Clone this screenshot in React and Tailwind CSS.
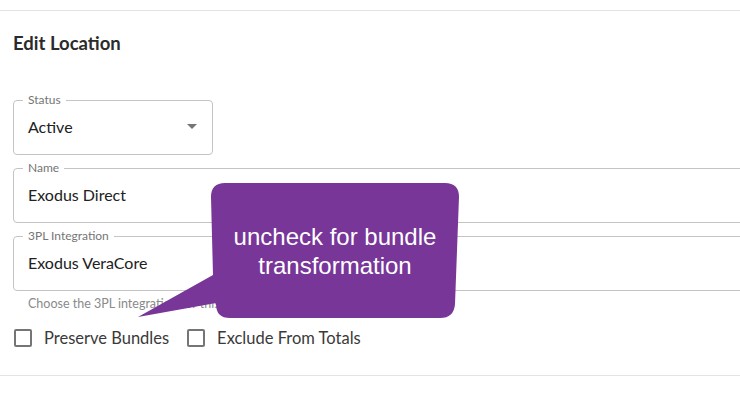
import React from "react";

const Field = ({ label, value, className = "", children }) => {
  return (
    <div className={`relative h-[55px] rounded-[4px] border border-[#c4c4c4] ${className}`}>
      <span className="absolute -top-[9px] left-[9px] bg-white px-[5px] text-[12px] leading-[16px] text-[#757575]">
        {label}
      </span>
      <div className="flex h-full items-center pl-[14px] pr-[14px] pb-[2px] text-[16px] text-[#212121]">
        <span className="flex-1">{value}</span>
        {children}
      </div>
    </div>
  );
};

const Checkbox = ({ label }) => {
  return (
    <label className="flex items-center">
      <span className="ml-[1px] h-[18px] w-[18px] rounded-[2px] border-2 border-[#757575]" />
      <span className="ml-[12px] text-[16.5px] leading-[18px] text-[#3a3a3a]">{label}</span>
    </label>
  );
};

const App = () => {
  return (
    <div
      className="relative h-[401px] w-[740px] overflow-hidden bg-white"
      style={{ fontFamily: "Lato, 'Open Sans', sans-serif" }}
    >
      <div className="mt-[10px] border-t border-[#e3e3e3] px-[13px]">
        <h1 className="mt-[22px] text-[18.5px] font-bold leading-[20px] text-[#2b2b2b]">
          Edit Location
        </h1>

        <div className="mt-[47px] flex flex-col gap-[13px]">
          <Field label="Status" value="Active" className="w-[200px]">
            <svg width="10" height="5" viewBox="0 0 10 5" className="mr-[1px]">
              <path d="M0 0 L10 0 L5 5 Z" fill="#757575" />
            </svg>
          </Field>
          <Field label="Name" value="Exodus Direct" className="w-[800px]" />
          <Field label="3PL Integration" value="Exodus VeraCore" className="w-[800px]" />
        </div>

        <p className="mt-[5px] pl-[15px] text-[12.5px] leading-[16px] text-[#8a8a8a]">
          Choose the 3PL integration for this location
        </p>

        <div className="mt-[17px] flex gap-[17px]">
          <Checkbox label="Preserve Bundles" />
          <Checkbox label="Exclude From Totals" />
        </div>
      </div>

      <div className="mt-[28px] border-t border-[#e3e3e3]" />

      {/* callout overlay */}
      <svg
        className="absolute left-0 top-0"
        width="740"
        height="401"
        viewBox="0 0 740 401"
      >
        <path
          d="M225 183 L445 183 Q459 183 459 197 L455 304 Q454 318 440 318 L230 318 Q216 318 216 304 L216 303 L138 317 L213 275 L211 197 Q211 183 225 183 Z"
          fill="#773698"
        />
      </svg>
      <div
        className="absolute left-[213px] top-[222px] w-[244px] text-center text-[24px] leading-[29px] text-white"
        style={{ fontFamily: "'Liberation Sans', Arial, sans-serif" }}
      >
        uncheck for bundle
        <br />
        transformation
      </div>
    </div>
  );
};

export default App;
